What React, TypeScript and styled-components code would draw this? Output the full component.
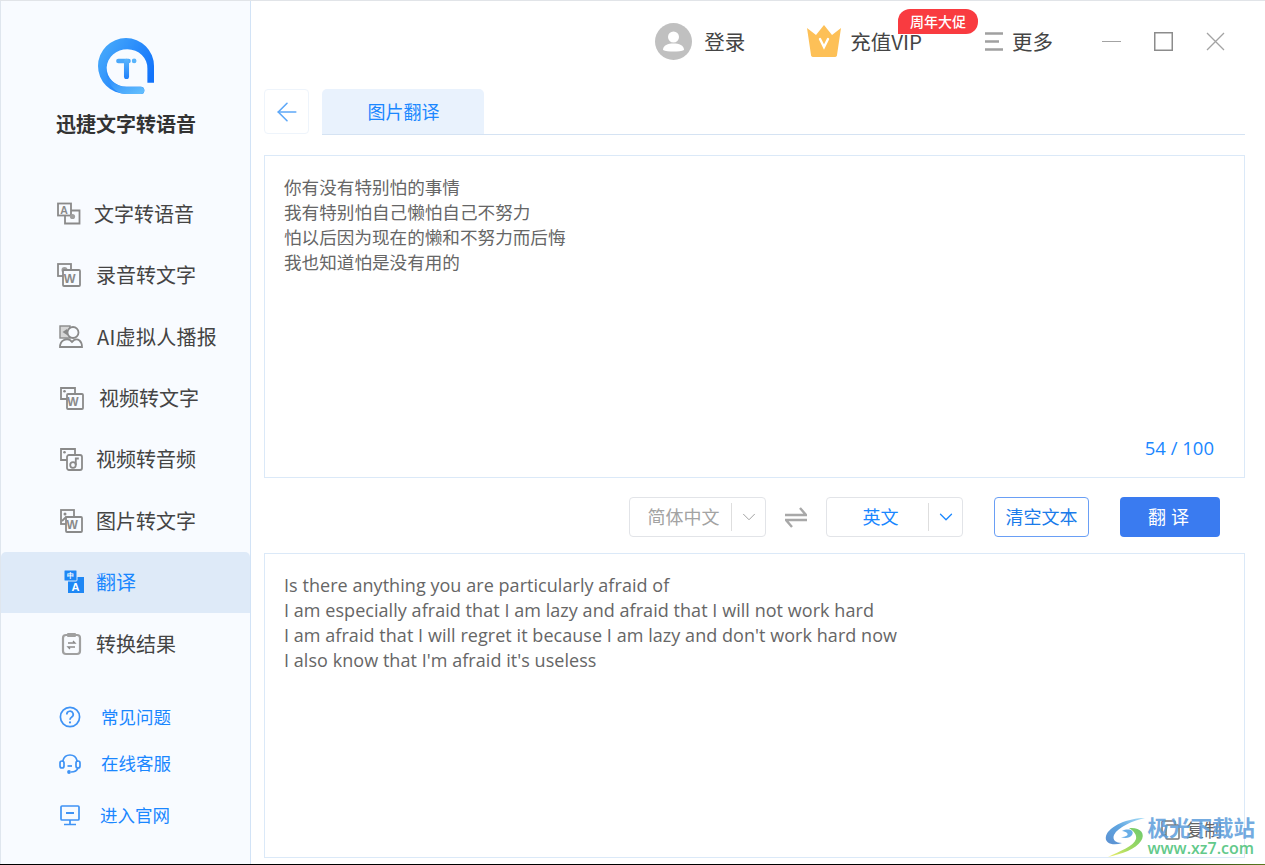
import styled, { createGlobalStyle } from 'styled-components';
import { ArrowLeft, ChevronDown } from 'lucide-react';

const CJK = `"Noto Sans CJK SC", "Open Sans", sans-serif`;

const GlobalStyle = createGlobalStyle`
    html, body {
        margin: 0;
        padding: 0;
        background: #fff;
    }
    * {
        box-sizing: border-box;
    }
`;

const Page = styled.div`
    width: 1265px;
    height: 865px;
    display: flex;
    flex-direction: column;
    overflow: hidden;
    position: relative;
    font-family: ${CJK};
    color: #444;
`;

const Body = styled.div`
    flex: 1;
    min-height: 0;
    display: flex;
    border-top: 1px solid #e1e4e8;
`;

const BottomStrip = styled.div`
    height: 1px;
    background: linear-gradient(90deg, #000 90%, #2e4a12 95%, #5c7a20 100%);
`;

const Sidebar = styled.aside`
    width: 251px;
    flex-shrink: 0;
    background: #f8fbff;
    border-left: 1px solid #dfe6ee;
    border-right: 1px solid #d2e3f6;
    display: flex;
    flex-direction: column;
    align-items: stretch;
`;

const Brand = styled.div`
    height: 182px;
    padding-top: 37px;
    display: flex;
    flex-direction: column;
    align-items: center;
`;

const BrandTitle = styled.div`
    margin-top: 15px;
    font-size: 20px;
    line-height: 30px;
    font-weight: 700;
    color: #333;
    margin-left: 1px;
`;

const Nav = styled.nav`
    display: flex;
    flex-direction: column;
`;

const NavRow = styled.div<{ $active?: boolean; $pad: number }>`
    height: 61.45px;
    display: flex;
    align-items: center;
    padding-left: ${props => props.$pad}px;
    background: ${props => (props.$active ? '#deeaf8' : 'transparent')};
    border-radius: ${props => (props.$active ? '5px 5px 0 0' : '0')};
    color: ${props => (props.$active ? '#1a87ff' : '#444')};
`;

const NavLabel = styled.span<{ $gap: number; $track?: number }>`
    margin-left: ${props => props.$gap}px;
    font-size: 20px;
    line-height: 28px;
    letter-spacing: ${props => props.$track ?? 0}px;
`;

const HelpList = styled.div`
    margin-top: 19px;
    display: flex;
    flex-direction: column;
`;

const HelpRow = styled.div<{ $height: number }>`
    height: ${props => props.$height}px;
    display: flex;
    align-items: center;
    padding-left: 57px;
    color: #1a87ff;
`;

const HelpLabel = styled.span<{ $gap: number }>`
    margin-left: ${props => props.$gap}px;
    font-size: 17.5px;
`;

const Main = styled.main`
    flex: 1;
    min-width: 0;
    padding: 0 20px 6px 13px;
    display: flex;
    flex-direction: column;
    background: #fff;
`;

const TopBar = styled.header`
    height: 88px;
    flex-shrink: 0;
    display: flex;
    align-items: center;
    justify-content: flex-end;
    padding-right: 20px;
    padding-bottom: 8px;
`;

const TopItem = styled.div<{ $gap: number; $right: number }>`
    display: flex;
    align-items: center;
    gap: ${props => props.$gap}px;
    margin-right: ${props => props.$right}px;
    position: relative;
    font-size: 20.5px;
    color: #444;
`;

const Badge = styled.span`
    position: absolute;
    top: -16px;
    right: -56px;
    width: 80px;
    height: 25px;
    border-radius: 12px 12px 12px 0;
    background: #f93b40;
    color: #fff;
    font-size: 14px;
    font-weight: 500;
    line-height: 25px;
    text-align: center;
`;

const WindowButtons = styled.div`
    display: flex;
    align-items: center;
    gap: 33px;
`;

const TabRow = styled.div`
    height: 46px;
    flex-shrink: 0;
    display: flex;
    align-items: flex-start;
`;

const BackButton = styled.button`
    width: 45px;
    height: 45px;
    padding: 0;
    border: 1px solid #eef4fb;
    border-radius: 4px;
    background: #fff;
    color: #5ea8f8;
    display: flex;
    align-items: center;
    justify-content: center;
`;

const TabTrack = styled.div`
    flex: 1;
    height: 46px;
    margin-left: 13px;
    border-bottom: 1px solid #d5e3f3;
`;

const Tab = styled.div`
    width: 162px;
    height: 45px;
    padding-left: 1px;
    border-radius: 5px 5px 0 0;
    background: #e9f2fd;
    color: #1a87ff;
    font-size: 18px;
    line-height: 45px;
    text-align: center;
`;

const Panel = styled.section<{ $top: number; $height: number; $latin?: boolean }>`
    height: ${props => props.$height}px;
    margin-top: ${props => props.$top}px;
    flex-shrink: 0;
    position: relative;
    padding: ${props => (props.$latin ? '19px' : '18px')} 19px;
    border: 1px solid #dbe9f8;
    font-size: ${props => (props.$latin ? '18px' : '17.6px')};
    font-family: ${props => (props.$latin ? `"Open Sans", sans-serif` : CJK)};
    letter-spacing: ${props => (props.$latin ? '0.05px' : '0')};
    line-height: 25px;
    color: #666;
    white-space: pre-line;
`;

const Counter = styled.span`
    position: absolute;
    right: 30px;
    bottom: 17px;
    font-family: "Open Sans", sans-serif;
    font-size: 18.5px;
    color: #1a87ff;
`;

const Controls = styled.div`
    height: 40px;
    margin-top: 19px;
    flex-shrink: 0;
    display: flex;
    align-items: center;
    justify-content: flex-end;
    padding-right: 25px;
`;

const Select = styled.div<{ $on?: boolean }>`
    width: 137px;
    height: 40px;
    display: grid;
    grid-template-columns: 1fr 34px;
    align-items: center;
    padding-left: 6px;
    padding-bottom: 2px;
    border: 1px solid #e2e4e8;
    border-radius: 4px;
    color: ${props => (props.$on ? '#1a87ff' : '#a3a3a3')};
    font-size: 18px;
    text-align: center;
`;

const SelectArrow = styled.span`
    height: 28px;
    margin-top: 2px;
    display: flex;
    align-items: center;
    justify-content: center;
    border-left: 1px solid #dedede;
`;

const SwapIcon = styled.svg`
    margin: 0 19px;
    flex-shrink: 0;
`;

const ClearButton = styled.button`
    width: 95px;
    height: 40px;
    margin-left: 31px;
    padding: 0 0 2px;
    border: 1px solid #6a9ff5;
    border-radius: 4px;
    background: #fff;
    color: #1a7bea;
    font-family: ${CJK};
    font-size: 18px;
`;

const TranslateButton = styled.button`
    width: 100px;
    height: 40px;
    margin-left: 31px;
    padding: 0 0 2px 2px;
    border: none;
    border-radius: 4px;
    background: #3a7bf0;
    color: #fff;
    font-family: ${CJK};
    font-size: 18px;
    letter-spacing: 5px;
`;

const CopyAction = styled.div`
    position: absolute;
    right: 22px;
    bottom: 15px;
    display: flex;
    align-items: center;
    gap: 5px;
    font-family: ${CJK};
    font-size: 18px;
    letter-spacing: 0;
    color: #666;
`;

const Watermark = styled.div`
    position: absolute;
    right: 10px;
    bottom: 7px;
    display: flex;
    align-items: center;
    gap: 1px;
    pointer-events: none;
`;

const WatermarkText = styled.div`
    display: flex;
    flex-direction: column;
`;

const WatermarkCn = styled.span`
    font-size: 21.5px;
    line-height: 24px;
    font-weight: 700;
    color: #5c9ddb;
    opacity: 0.85;
`;

const WatermarkUrl = styled.span`
    font-family: "Open Sans", sans-serif;
    font-size: 16px;
    line-height: 19px;
    font-weight: 600;
    color: #62c98a;
`;

const Logo = () => (
    <svg width="56" height="56" viewBox="0 0 55 55">
        <defs>
            <linearGradient id="lg" x1="0" y1="0" x2="1" y2="0.6">
                <stop offset="0" stopColor="#4db0fb" />
                <stop offset="1" stopColor="#1273fb" />
            </linearGradient>
            <linearGradient id="lg2" x1="0" y1="0" x2="1" y2="1">
                <stop offset="0" stopColor="#1d80fb" />
                <stop offset="1" stopColor="#66c1fd" />
            </linearGradient>
            <linearGradient id="lg3" x1="0" y1="0" x2="0" y2="1">
                <stop offset="0" stopColor="#5ab6fc" />
                <stop offset="1" stopColor="#1f80fb" />
            </linearGradient>
        </defs>
        <path d="M0 27.5A27.5 27.5 0 0 1 55 27.5V44H48.5V30A20 18.5 0 1 0 28 48H42Q45.5 48 45.5 51.5Q45.5 55 42 55H27.5A27.5 27.5 0 0 1 0 27.5Z" fill="url(#lg)" />
        <path d="M8 30A20 18.5 0 0 0 28 48H42Q45.5 48 45.5 51.5Q45.5 55 42 55H27.5C16 55 8 43 8 30Z" fill="url(#lg2)" />
        <path d="M20 22.5H30" stroke="#4aa8fb" strokeWidth="4.4" strokeLinecap="round" fill="none" />
        <rect x="25.5" y="20.3" width="5" height="20" rx="2.5" fill="url(#lg3)" />
        <circle cx="35.5" cy="22.5" r="2.3" fill="#58b4fc" />
    </svg>
);

type NavKind = 'text' | 'record' | 'avatar' | 'videoText' | 'videoAudio' | 'image' | 'translate' | 'result';

const Letter = ({ x, y, children, color = '#8a8a8a', size = 11.5 }: { x: number; y: number; children: string; color?: string; size?: number }) => (
    <text x={x} y={y} fontFamily="Liberation Sans, sans-serif" fontWeight="700" fontSize={size} fill={color}>{children}</text>
);

const NavIcon = ({ kind }: { kind: NavKind }) => {
    const stroke = { fill: 'none', stroke: '#8a8a8a', strokeWidth: 1.8 };
    const paper = { fill: '#f8fbff', stroke: '#8a8a8a', strokeWidth: 1.8 };
    let content;
    if (kind === 'text') {
        content = (
            <>
                <path d="M10 8.5H22.5V21.5H8V14" {...stroke} />
                <rect x="1" y="1.5" width="13" height="12" fill="#f8fbff" stroke="#8a8a8a" strokeWidth="1.8" />
                <Letter x={3.3} y={11.5} size={10.5}>A</Letter>
                <circle cx="15.5" cy="14.5" r="2.6" fill="#a0a0a0" />
            </>
        );
    } else if (kind === 'record') {
        content = (
            <>
                <rect x="1" y="1" width="13" height="12" {...stroke} />
                <circle cx="7.5" cy="7" r="3" fill="#a0a0a0" />
                <rect x="6" y="7" width="17" height="16" rx="1" {...paper} />
                <Letter x={6.8} y={19.5} size={12.5}>W</Letter>
            </>
        );
    } else if (kind === 'avatar') {
        content = (
            <>
                <rect x="1" y="1" width="10" height="12" fill="#d6d6d6" stroke="#8a8a8a" strokeWidth="1.4" />
                <path d="M8 4L3.5 7L8 10Z" fill="#8a8a8a" />
                <circle cx="14" cy="7.5" r="5.5" {...paper} />
                <path d="M1 22C1 15.5 7 13 11 15L13 17L15 15C19 13 23 16 23 22Z" {...paper} />
            </>
        );
    } else if (kind === 'videoText') {
        content = (
            <>
                <path d="M1 2H15V13H1Z" {...stroke} />
                <circle cx="4.5" cy="5.2" r="1.3" fill="#8a8a8a" />
                <rect x="7" y="8" width="16" height="15" rx="1" {...paper} />
                <Letter x={7.3} y={20} size={12}>W</Letter>
            </>
        );
    } else if (kind === 'videoAudio') {
        content = (
            <>
                <path d="M1 2H15V13H1Z" {...stroke} />
                <circle cx="4.5" cy="5.2" r="1.3" fill="#8a8a8a" />
                <rect x="7" y="8" width="15" height="15" rx="2" {...paper} />
                <circle cx="13" cy="18" r="2.8" {...stroke} />
                <path d="M15.8 18V11.5H18.8" {...stroke} />
            </>
        );
    } else if (kind === 'image') {
        content = (
            <>
                <rect x="1" y="1" width="13" height="14" {...stroke} />
                <path d="M2 12L6 8L10 11" {...stroke} />
                <circle cx="5" cy="5" r="1.5" fill="#8a8a8a" />
                <rect x="6" y="8" width="16" height="15" rx="1" {...paper} />
                <Letter x={6.4} y={20} size={12}>W</Letter>
            </>
        );
    } else if (kind === 'translate') {
        content = (
            <>
                <rect x="5" y="7" width="16" height="16" fill="#1e87f5" />
                <rect x="1" y="0" width="13" height="11" rx="1" fill="#1e87f5" stroke="#deeaf8" strokeWidth="1" />
                <Letter x={4} y={8} color="#fff" size={7}>中</Letter>
                <Letter x={8.5} y={21} color="#fff" size={11}>A</Letter>
            </>
        );
    } else {
        content = (
            <>
                <rect x="3" y="3" width="17" height="19" rx="3" fill="none" stroke="#a0a0a0" strokeWidth="2.2" />
                <rect x="7" y="1" width="9" height="4" rx="1" fill="#a0a0a0" />
                <path d="M8 11H15L13 9M15 15H8L10 17" fill="none" stroke="#8a8a8a" strokeWidth="1.3" />
            </>
        );
    }
    return <svg width="24" height="24" viewBox="0 0 24 24">{content}</svg>;
};

const navItems: Array<{ label: string; kind: NavKind; pad: number; gap: number; active?: boolean; track?: number }> = [
    { label: '文字转语音', kind: 'text', pad: 56, gap: 13 },
    { label: '录音转文字', kind: 'record', pad: 56, gap: 15 },
    { label: 'AI虚拟人播报', kind: 'avatar', pad: 58, gap: 14, track: 0.3 },
    { label: '视频转文字', kind: 'videoText', pad: 59, gap: 15 },
    { label: '视频转音频', kind: 'videoAudio', pad: 59, gap: 12 },
    { label: '图片转文字', kind: 'image', pad: 59, gap: 12 },
    { label: '翻译', kind: 'translate', pad: 62, gap: 9, active: true },
    { label: '转换结果', kind: 'result', pad: 59, gap: 12 },
];

const HelpIcon = ({ kind }: { kind: 'question' | 'service' | 'site' }) => {
    const line = { fill: 'none', stroke: '#3f93f5', strokeWidth: 1.7 };
    return (
        <svg width="24" height="24" viewBox="0 0 24 24">
            {kind === 'question' && (
                <>
                    <circle cx="12" cy="12" r="9.6" {...line} />
                    <path d="M8.8 9.5A3.2 3.2 0 1 1 13.5 12.2C12.4 12.9 12 13.4 12 14.8" {...line} />
                    <circle cx="12" cy="17.4" r="1.1" fill="#3f93f5" />
                </>
            )}
            {kind === 'service' && (
                <>
                    <path d="M5 11V9.5A7.2 7.2 0 0 1 19 9.5V11" {...line} />
                    <rect x="2" y="10" width="4" height="7" rx="2" {...line} />
                    <rect x="18" y="10" width="4" height="7" rx="2" {...line} />
                    <path d="M20 17C19 20 16 21 13 21" {...line} />
                    <circle cx="11" cy="21" r="1.9" fill="#3f93f5" />
                    <path d="M9.5 15H14" {...line} />
                </>
            )}
            {kind === 'site' && (
                <>
                    <rect x="3" y="3" width="18" height="14" rx="1" {...line} />
                    <path d="M8 10H16" stroke="#3f93f5" strokeWidth="2" fill="none" />
                    <path d="M12 17V21M6 21.5H18" {...line} />
                </>
            )}
        </svg>
    );
};

const helpItems: Array<{ label: string; kind: 'question' | 'service' | 'site'; height: number; gap: number }> = [
    { label: '常见问题', kind: 'question', height: 46, gap: 19 },
    { label: '在线客服', kind: 'service', height: 46, gap: 19 },
    { label: '进入官网', kind: 'site', height: 58, gap: 18 },
];

const Avatar = () => (
    <svg width="37" height="37" viewBox="0 0 37 37">
        <circle cx="18.5" cy="18.5" r="18.5" fill="#c0c0c0" />
        <circle cx="18.5" cy="14" r="5.5" fill="#fff" />
        <path d="M8 27C8 22 13 20.5 18.5 20.5C24 20.5 29 22 29 27C25 29 12 29 8 27Z" fill="#fff" />
    </svg>
);

const Crown = () => (
    <svg width="36" height="32" viewBox="0 0 36 32">
        <path d="M1 3L10 10L18 0L26 10L35 3L31 30Q31 32 28 32H8Q5 32 5 30Z" fill="#fdc057" />
        <path d="M14 14L18 22L22 14" fill="none" stroke="#fff" strokeWidth="2.4" strokeLinecap="round" />
    </svg>
);

const MenuIcon = () => (
    <svg width="19" height="19" viewBox="0 0 19 19">
        <path d="M0 1.5H18M0 9.5H14M0 17.5H18" stroke="#a0a0a0" strokeWidth="2.4" fill="none" />
    </svg>
);

const WindowIcon = ({ kind }: { kind: 'min' | 'max' | 'close' }) => (
    <svg width="19" height="19" viewBox="0 0 19 19">
        {kind === 'min' && <path d="M0 9.5H19" stroke="#a3a3a3" strokeWidth="1" fill="none" />}
        {kind === 'max' && <rect x="0.75" y="0.75" width="17.5" height="17.5" fill="none" stroke="#8c8c8c" strokeWidth="1.5" />}
        {kind === 'close' && <path d="M1 1L18 18M18 1L1 18" stroke="#a3a3a3" strokeWidth="1.3" fill="none" />}
    </svg>
);

const Swap = () => (
    <SwapIcon width="22" height="22" viewBox="0 0 22 22">
        <path d="M0 9H21L15 2" fill="none" stroke="#a8a8a8" strokeWidth="2.4" />
        <path d="M22 14H1L7 21" fill="none" stroke="#a8a8a8" strokeWidth="2.4" />
    </SwapIcon>
);

const CopyIcon = () => (
    <svg width="20" height="20" viewBox="0 0 20 20">
        <rect x="1" y="1" width="13" height="14" rx="1" fill="none" stroke="#777" strokeWidth="1.5" />
        <rect x="5" y="5" width="13" height="14" rx="1" fill="#fff" stroke="#777" strokeWidth="1.5" />
    </svg>
);

const Swirl = () => (
    <svg width="42" height="42" viewBox="0 0 42 42">
        <defs>
            <linearGradient id="sw1" x1="1" y1="0" x2="0" y2="1">
                <stop offset="0" stopColor="#a8def8" />
                <stop offset="0.5" stopColor="#5fa5e0" />
                <stop offset="1" stopColor="#5b8fd0" />
            </linearGradient>
            <linearGradient id="sw2" x1="1" y1="0" x2="0" y2="1">
                <stop offset="0" stopColor="#6cc96e" />
                <stop offset="0.6" stopColor="#a8dc60" />
                <stop offset="1" stopColor="#f2ee70" />
            </linearGradient>
        </defs>
        <path d="M41 2C24 2 5 10 2 20C0 28 10 30 18 27C12 27 8 24 10 19C14 11 28 5 41 2Z" fill="url(#sw1)" />
        <path d="M18 15C24 12 31 14 28 19C26 22 21 23 17 21C22 21 25 19 23 17C22 16 20 15 18 15Z" fill="#6aaee6" />
        <path d="M25 12C36 11 42 17 37 25C32 33 18 38 4 41C16 35 30 30 32 23C33 19 30 15 25 12Z" fill="url(#sw2)" />
    </svg>
);

const sourceText = `你有没有特别怕的事情
我有特别怕自己懒怕自己不努力
怕以后因为现在的懒和不努力而后悔
我也知道怕是没有用的`;

const targetText = `Is there anything you are particularly afraid of
I am especially afraid that I am lazy and afraid that I will not work hard
I am afraid that I will regret it because I am lazy and don't work hard now
I also know that I'm afraid it's useless`;

const App = () => {
    return (
        <Page>
            <GlobalStyle />
            <Body>
                <Sidebar>
                    <Brand>
                        <Logo />
                        <BrandTitle>迅捷文字转语音</BrandTitle>
                    </Brand>
                    <Nav>
                        {navItems.map((item) => (
                            <NavRow key={item.label} $active={item.active} $pad={item.pad}>
                                <NavIcon kind={item.kind} />
                                <NavLabel $gap={item.gap} $track={item.track}>{item.label}</NavLabel>
                            </NavRow>
                        ))}
                    </Nav>
                    <HelpList>
                        {helpItems.map((item) => (
                            <HelpRow key={item.label} $height={item.height}>
                                <HelpIcon kind={item.kind} />
                                <HelpLabel $gap={item.gap}>{item.label}</HelpLabel>
                            </HelpRow>
                        ))}
                    </HelpList>
                </Sidebar>
                <Main>
                    <TopBar>
                        <TopItem $gap={12} $right={61}>
                            <Avatar />
                            登录
                        </TopItem>
                        <TopItem $gap={8} $right={63}>
                            <Crown />
                            充值VIP
                            <Badge>周年大促</Badge>
                        </TopItem>
                        <TopItem $gap={8} $right={49}>
                            <MenuIcon />
                            更多
                        </TopItem>
                        <WindowButtons>
                            <WindowIcon kind="min" />
                            <WindowIcon kind="max" />
                            <WindowIcon kind="close" />
                        </WindowButtons>
                    </TopBar>
                    <TabRow>
                        <BackButton>
                            <ArrowLeft size={30} strokeWidth={1.3} />
                        </BackButton>
                        <TabTrack>
                            <Tab>图片翻译</Tab>
                        </TabTrack>
                    </TabRow>
                    <Panel $top={20} $height={323}>
                        {sourceText}
                        <Counter>54 / 100</Counter>
                    </Panel>
                    <Controls>
                        <Select>
                            简体中文
                            <SelectArrow><ChevronDown size={22} strokeWidth={1} color="#999" /></SelectArrow>
                        </Select>
                        <Swap />
                        <Select $on>
                            英文
                            <SelectArrow><ChevronDown size={22} strokeWidth={1.4} color="#1a87ff" /></SelectArrow>
                        </Select>
                        <ClearButton>清空文本</ClearButton>
                        <TranslateButton>翻译</TranslateButton>
                    </Controls>
                    <Panel $top={16} $height={305} $latin>
                        {targetText}
                        <CopyAction>
                            <CopyIcon />
                            复制
                        </CopyAction>
                    </Panel>
                </Main>
            </Body>
            <BottomStrip />
            <Watermark>
                <Swirl />
                <WatermarkText>
                    <WatermarkCn>极光下载站</WatermarkCn>
                    <WatermarkUrl>www.xz7.com</WatermarkUrl>
                </WatermarkText>
            </Watermark>
        </Page>
    );
};

export default App;
